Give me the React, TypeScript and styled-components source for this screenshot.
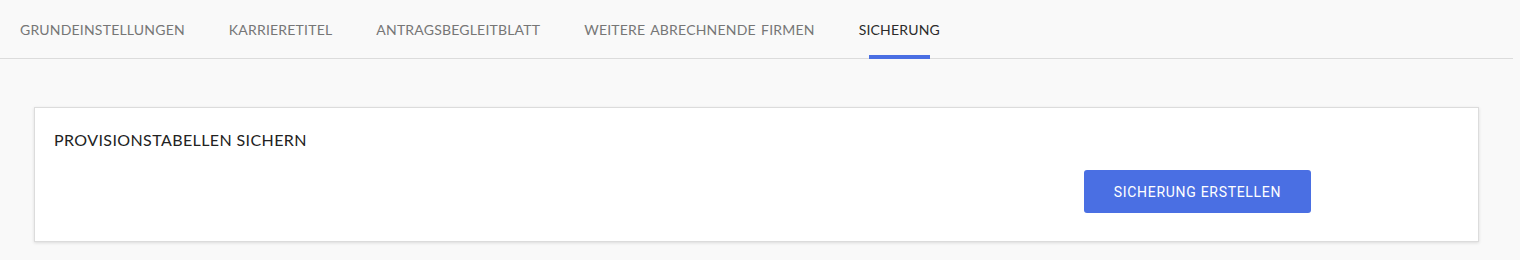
import styled, { createGlobalStyle } from "styled-components";

const GlobalStyle = createGlobalStyle`
	html, body {
		margin: 0;
		padding: 0;
		background-color: #f9f9f9;
	}
	body {
		font-family: Lato, "Open Sans", sans-serif;
	}
`;

const Page = styled.div`
	width: 1520px;
	height: 260px;
	background-color: #f9f9f9;
`;

const TabBar = styled.nav`
	display: flex;
	height: 58px;
	margin-right: 7px;
	border-bottom: 1px solid #dcdcdc;
	box-sizing: content-box;
`;

const Tab = styled.div<{ $active?: boolean }>`
	position: relative;
	display: flex;
	align-items: center;
	padding: 0 22px;
	font-size: 14px;
	letter-spacing: 0.2px;
	word-spacing: 1.5px;
	text-transform: uppercase;
	color: ${(props) => (props.$active ? "#2b2b2b" : "#767676")};
	cursor: pointer;

	&:first-child {
		padding-left: 20px;
	}

	&::after {
		content: "";
		display: ${(props) => (props.$active ? "block" : "none")};
		position: absolute;
		left: 32px;
		right: 32px;
		bottom: -1px;
		height: 4px;
		background-color: #4a6fe3;
	}
`;

const Content = styled.main`
	padding: 48px 41px 0 34px;
`;

const Card = styled.section`
	background-color: #ffffff;
	border: 1px solid #dcdcdc;
	box-shadow: 0 1px 3px rgba(0, 0, 0, 0.12);
	padding: 21px 20px 28px 19px;
	height: 135px;
	box-sizing: border-box;
`;

const CardTitle = styled.h2`
	margin: 0;
	font-size: 16px;
	font-weight: 400;
	letter-spacing: 0.4px;
	text-transform: uppercase;
	color: #222;
	line-height: 22px;
`;

const ActionRow = styled.div`
	display: grid;
	grid-template-columns: 1030px 227px;
	margin-top: 19px;
`;

const Button = styled.button`
	grid-column: 2;
	height: 43px;
	border: none;
	border-radius: 3px;
	background-color: #4a6fe3;
	color: #ffffff;
	font-family: Roboto, "Liberation Sans", sans-serif;
	font-size: 14px;
	letter-spacing: 0.7px;
	text-transform: uppercase;
	cursor: pointer;
`;

const tabs = [
	"Grundeinstellungen",
	"Karrieretitel",
	"Antragsbegleitblatt",
	"Weitere abrechnende Firmen",
	"Sicherung",
];

function App() {
	return (
		<Page>
			<GlobalStyle />
			<TabBar>
				{tabs.map((tab) => (
					<Tab key={tab} $active={tab === "Sicherung"}>
						{tab}
					</Tab>
				))}
			</TabBar>
			<Content>
				<Card>
					<CardTitle>Provisionstabellen sichern</CardTitle>
					<ActionRow>
						<Button>Sicherung erstellen</Button>
					</ActionRow>
				</Card>
			</Content>
		</Page>
	);
}

export default App;
